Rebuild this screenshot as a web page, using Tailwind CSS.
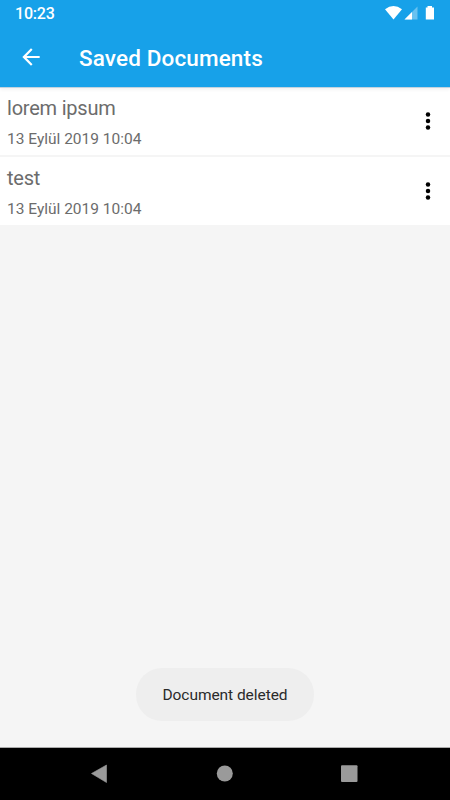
<!DOCTYPE html>
<html lang="en">
<head>
<meta charset="utf-8">
<meta name="viewport" content="width=device-width, initial-scale=1">
<title>Saved Documents</title>
<script src="https://cdn.jsdelivr.net/npm/@tailwindcss/browser@4"></script>
</head>
<body class="font-[Roboto,sans-serif]">
<div class="flex h-[800px] w-[450px] flex-col overflow-hidden bg-[#f5f5f5]">
  <header class="z-10 h-[87px] shrink-0 bg-[#17a1e9] text-white shadow-[0_1px_0_#c2d3df,0_2px_4px_rgba(0,0,0,0.08)]">
    <div class="flex h-[28px] items-center justify-between pl-[15px] pr-[15px]">
      <span class="text-[16px] font-medium leading-[28px] tracking-[-0.2px]">10:23</span>
      <svg width="50" height="28" viewBox="385 0 50 28" fill="#fff">
        <path d="M385 9.2Q393.5 2.8 402 9.2L393.500 19.500Z"/>
        <path d="M417.500 6.500V19.500H404.500Z" fill-opacity=".35"/>
        <path d="M412 12V19.500H404.500Z"/>
        <path d="M427.500 7.500V6H432V7.500H434V19.500H425.800V7.500Z"/>
      </svg>
    </div>
    <div class="flex h-[58px] items-center pl-[18px]">
      <svg width="26" height="26" viewBox="0 0 24 24" fill="#fff"><path d="M20 11H7.830l5.590-5.590L12 4l-8 8 8 8 1.410-1.410L7.830 13H20v-2z"/></svg>
      <h1 class="ml-[35px] pt-px text-[22.5px] font-medium leading-[30px] tracking-[0.13px]">Saved Documents</h1>
    </div>
  </header>

  <main class="flex flex-1 flex-col">
    <ul class="flex flex-col gap-[2px] pt-px">
      <li class="flex h-[67px] justify-between bg-white pl-[7px] pr-[17px] text-[#6c6c6c]">
        <div class="flex flex-col gap-[7px] pt-[7px]">
          <span class="text-[20px] leading-[26px] tracking-[-0.22px]">lorem ipsum</span>
          <span class="text-[15.5px] leading-[22px]">13 Eylül 2019 10:04</span>
        </div>
        <svg class="mt-[23px]" width="10" height="20" viewBox="0 0 10 20"><circle cx="5" cy="3.500" r="2.250"/><circle cx="5" cy="10" r="2.250"/><circle cx="5" cy="16.500" r="2.250"/></svg>
      </li>
      <li class="flex h-[67.5px] justify-between bg-white pl-[7px] pr-[17px] text-[#6c6c6c]">
        <div class="flex flex-col gap-[7px] pt-[8px]">
          <span class="text-[20px] leading-[26px] tracking-[-0.22px]">test</span>
          <span class="text-[15.5px] leading-[22px]">13 Eylül 2019 10:04</span>
        </div>
        <svg class="mt-[23.5px]" width="10" height="20" viewBox="0 0 10 20"><circle cx="5" cy="3.500" r="2.250"/><circle cx="5" cy="10" r="2.250"/><circle cx="5" cy="16.500" r="2.250"/></svg>
      </li>
    </ul>
    <div class="mx-auto mb-[26px] mt-auto flex h-[53px] w-[178px] items-center justify-center rounded-[26px] bg-[#eee] pt-[2px] text-[15.5px] tracking-[-0.05px] text-[#2a2a2a]">Document deleted</div>
  </main>

  <nav class="h-[53px] shrink-0 border-t border-[#aaa] bg-black">
    <svg width="450" height="52" viewBox="0 748 450 52" fill="#9a9a9a">
      <path d="M91.500 773.500L106.500 765V782.500Z" stroke="#9a9a9a" stroke-width=".6" stroke-linejoin="round"/>
      <circle cx="224.800" cy="773.500" r="8"/>
      <rect x="341" y="765.200" width="16.500" height="16.800" rx="1"/>
    </svg>
  </nav>
</div>
</body>
</html>
